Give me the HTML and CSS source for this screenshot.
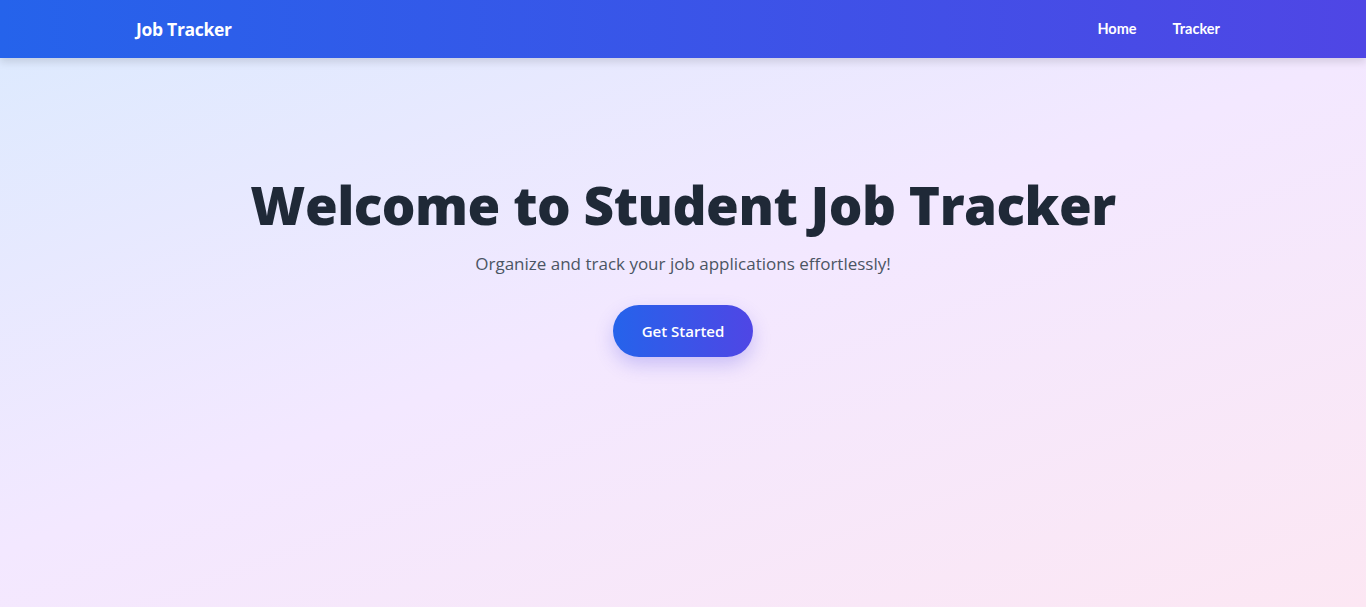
FILE: index.html
```html
<!DOCTYPE html>
<html lang="en">
<head>
<meta charset="utf-8">
<title>Job Tracker</title>
<link rel="stylesheet" href="styles.css">
</head>
<body>
<header class="topbar">
  <div class="topbar-inner">
    <a class="brand" href="#">Job Tracker</a>
    <nav class="nav">
      <a class="nav-link" href="#">Home</a>
      <a class="nav-link" href="#">Tracker</a>
    </nav>
  </div>
</header>
<main class="hero">
  <h1 class="hero-title">Welcome to Student Job Tracker</h1>
  <p class="hero-sub">Organize and track your job applications effortlessly!</p>
  <a class="cta" href="#">Get Started</a>
</main>
</body>
</html>
```
FILE: styles.css
```css
* { box-sizing: border-box; }
html, body { margin: 0; height: 100%; }
body {
  font-family: "Segoe UI", "Open Sans", "Noto Sans", sans-serif;
  background: linear-gradient(160deg, #dbeafe 0%, #f3e8ff 50%, #fce7f3 100%);
  min-height: 100vh;
  display: flex;
  flex-direction: column;
}
a { text-decoration: none; color: inherit; }
.topbar {
  height: 58px;
  background: linear-gradient(90deg, #2563eb, #4f46e5);
  box-shadow: 0 4px 8px rgba(0,0,0,0.12);
  color: #fff;
  position: relative;
  z-index: 1;
}
.topbar-inner {
  max-width: 1094px;
  margin: 0 auto;
  height: 100%;
  display: flex;
  align-items: center;
  justify-content: space-between;
}
.brand {
  font-family: "Open Sans", sans-serif;
  font-weight: 700;
  font-size: 17.5px;
  letter-spacing: -0.3px;
  margin-top: -1px;
}
.nav { display: flex; gap: 16px; margin-top: -2px; }
.nav-link {
  font-family: Lato, sans-serif;
  font-weight: 700;
  font-size: 14.5px;
  padding: 6px 10px;
}
.hero {
  flex: 1;
  display: flex;
  flex-direction: column;
  align-items: center;
  padding-top: 115px;
}
.hero-title {
  margin: 0;
  font-family: "Open Sans", sans-serif;
  font-weight: 800;
  font-size: 53px;
  line-height: 1.2;
  color: #1f2937;
  letter-spacing: -0.5px;
}
.hero-sub {
  margin: 15px 0 0;
  font-family: "Open Sans", sans-serif;
  font-size: 17px;
  color: #4b5563;
}
.cta {
  margin-top: 30px;
  padding: 16px 29px;
  border-radius: 999px;
  background: linear-gradient(90deg, #2563eb, #4f46e5);
  color: #fff;
  font-family: "Open Sans", sans-serif;
  font-weight: 600;
  font-size: 15px;
  box-shadow: 0 8px 18px rgba(79,70,229,0.25);
}
```
